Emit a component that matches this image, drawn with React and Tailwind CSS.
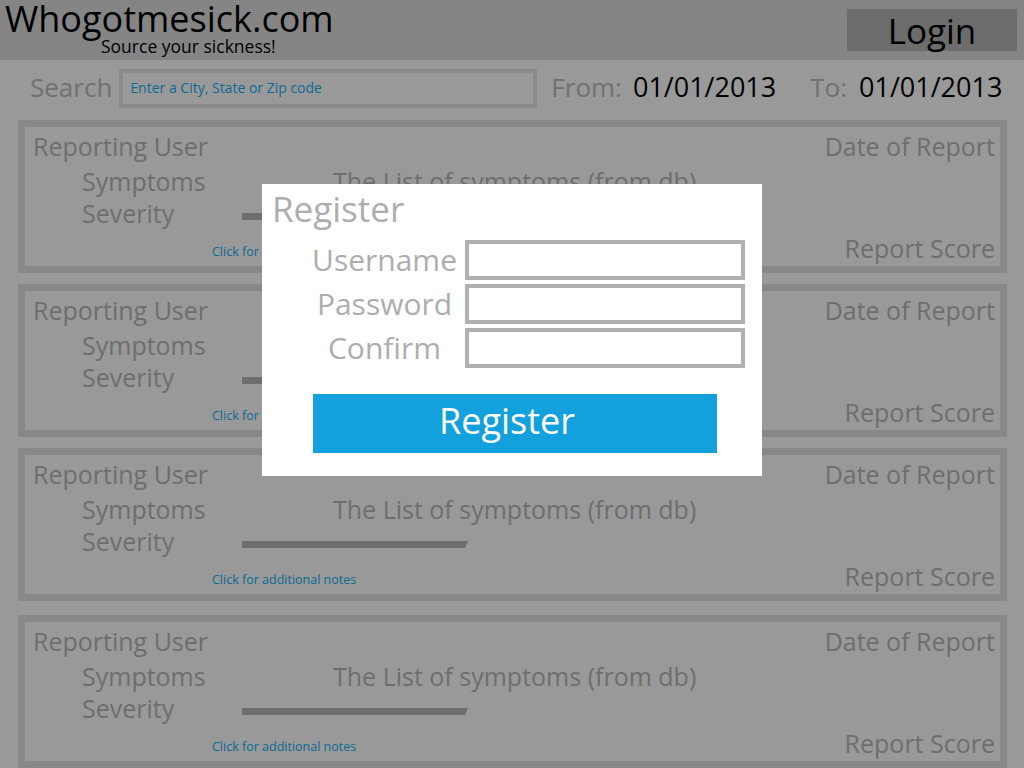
import React from 'react'

const CARDS = [0, 1, 2, 3]

function ReportCard({ last }) {
  return (
    <div className={`w-[989px] h-[153px] shrink-0 border-[7px] border-[#888888] flex flex-col text-[25px] text-[#6e6e6e] leading-none ${last ? 'mt-[3px]' : ''}`}>
      <div className="h-[38px] flex justify-between items-center pl-[8px] pr-[5px]">
        <span>Reporting User</span>
        <span>Date of Report</span>
      </div>
      <div className="h-[32px] flex items-center pl-[57px]">
        <span className="w-[251px]">Symptoms</span>
        <span>The List of symptoms (from db)</span>
      </div>
      <div className="h-[33px] flex items-center pl-[57px]">
        <span className="w-[160px]">Severity</span>
        <div className="w-[226px] h-[7px] mt-[6px] bg-[#6e6e6e] [clip-path:polygon(0_0,100%_0,98.7%_100%,0_100%)]" />
      </div>
      <div className="h-[36px] flex justify-between items-center pl-[187px] pr-[5px]">
        <span className="text-[12.5px] text-[#0d6994] pt-[8px]">Click for additional notes</span>
        <span>Report Score</span>
      </div>
    </div>
  )
}

export default function App() {
  return (
    <div className="relative w-[1024px] h-[768px] overflow-hidden bg-[#999999] font-['Open_Sans',sans-serif]">
      {/* header */}
      <div className="h-[60px] bg-[#858585] flex justify-between">
        <div className="pl-[5px] flex flex-col">
          <span className="text-[36px] leading-[38px] text-black">Whogotmesick.com</span>
          <span className="text-[17.5px] leading-none text-black ml-[96px]">Source your sickness!</span>
        </div>
        <div className="mt-[9px] mr-[7px] w-[170px] h-[42px] bg-[#6c6c6c] flex items-center justify-center">
          <span className="text-[35px] leading-none text-black">Login</span>
        </div>
      </div>

      {/* search row */}
      <div className="h-[58px] flex items-center text-[26px] leading-none pb-[5px]">
        <span className="ml-[30px] text-[#717171]">Search</span>
        <div className="ml-[7px] w-[418px] h-[39px] mt-[3px] border-[4px] border-[#8b8b8b] flex items-center pl-[7px]">
          <span className="text-[14px] text-[#0d6994]">Enter a City, State or Zip code</span>
        </div>
        <span className="ml-[14px] text-[#717171]">From:</span>
        <span className="ml-[11px] text-[27px] text-black">01/01/2013</span>
        <span className="ml-[34px] text-[#717171]">To:</span>
        <span className="ml-[12px] text-[27px] text-black">01/01/2013</span>
      </div>

      {/* report cards */}
      <div className="mt-[2px] px-[18px] flex flex-col gap-[11px]">
        {CARDS.map(i => <ReportCard key={i} last={i === 3} />)}
      </div>

      {/* register modal */}
      <div className="absolute left-[262px] top-[184px] w-[500px] h-[292px] bg-white flex flex-col">
        <div className="h-[48px] flex items-center pl-[10px] mb-[4px]">
          <span className="text-[35px] leading-none text-[#adadad]">Register</span>
        </div>
        <div className="mt-[4px] flex flex-col gap-[4px]">
          {['Username', 'Password', 'Confirm'].map(l => (
            <div key={l} className="h-[40px] flex items-center">
              <span className="ml-[50px] w-[145px] text-center text-[30px] leading-none text-[#adadad]">{l}</span>
              <div className="ml-[8px] w-[280px] h-[40px] border-[4px] border-[#b1b1b1]" />
            </div>
          ))}
        </div>
        <div className="mt-[26px] ml-[51px] w-[404px] h-[59px] bg-[#12a1dc] flex items-center justify-center pb-[6px] pr-[16px]">
          <span className="text-[36px] leading-none text-white">Register</span>
        </div>
      </div>
    </div>
  )
}
